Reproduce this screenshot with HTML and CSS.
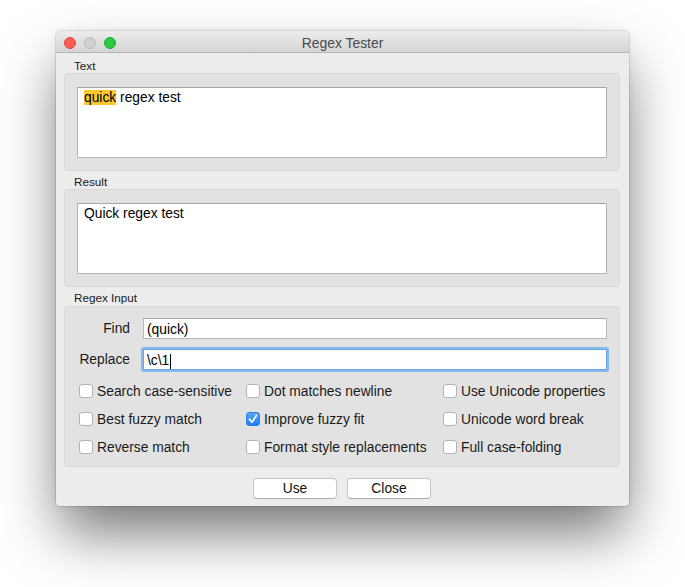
FILE: index.html
```html
<!DOCTYPE html>
<html>
<head>
<meta charset="utf-8">
<title>Regex Tester</title>
<link rel="stylesheet" href="styles.css">
</head>
<body>
<div class="window">
  <div class="titlebar">
    <div class="lights">
      <span class="light red"></span>
      <span class="light gray"></span>
      <span class="light green"></span>
    </div>
    <div class="title">Regex Tester</div>
  </div>
  <div class="content">
    <div class="glabel first">Text</div>
    <div class="group">
      <div class="textarea"><span class="hl">quick</span> regex test</div>
    </div>
    <div class="glabel">Result</div>
    <div class="group">
      <div class="textarea">Quick regex test</div>
    </div>
    <div class="glabel third">Regex Input</div>
    <div class="group regex">
      <div class="fields">
        <div class="flabel">Find</div>
        <div class="field">(quick)</div>
        <div class="flabel">Replace</div>
        <div class="field focus">\c\1<span class="caret"></span></div>
      </div>
      <div class="checks">
        <div class="check"><span class="box"></span>Search case-sensitive</div>
        <div class="check"><span class="box"></span>Dot matches newline</div>
        <div class="check"><span class="box"></span>Use Unicode properties</div>
        <div class="check"><span class="box"></span>Best fuzzy match</div>
        <div class="check"><span class="box on"><svg viewBox="0 0 14 14" width="14" height="14"><path d="M3.6 7.4 L6 10.2 L10.4 3.4" fill="none" stroke="#fff" stroke-width="1.7" stroke-linecap="round" stroke-linejoin="round"/></svg></span>Improve fuzzy fit</div>
        <div class="check"><span class="box"></span>Unicode word break</div>
        <div class="check"><span class="box"></span>Reverse match</div>
        <div class="check"><span class="box"></span>Format style replacements</div>
        <div class="check"><span class="box"></span>Full case-folding</div>
      </div>
    </div>
    <div class="buttons">
      <div class="btn">Use</div>
      <div class="btn">Close</div>
    </div>
  </div>
</div>
</body>
</html>
```
FILE: styles.css
```css
html, body {
  margin: 0;
  padding: 0;
  background: #ffffff;
}
body {
  min-height: 587px;
  box-sizing: border-box;
  padding: 31px 0 0 56px;
  font-family: "Liberation Sans", Arial, sans-serif;
  font-size: 13.8px;
  color: #000;
}
.window {
  width: 573px;
  height: 475px;
  box-sizing: border-box;
  background: #ececec;
  border-radius: 5px 5px 4px 4px;
  box-shadow: 0 0 0 1px rgba(0,0,0,0.09), 0 0 6px rgba(0,0,0,0.08), 0 30px 58px -4px rgba(0,0,0,0.55);
  display: flex;
  flex-direction: column;
  overflow: hidden;
}
.titlebar {
  height: 21px;
  border-bottom: 1px solid #b4b4b4;
  background: linear-gradient(#ececec, #d5d5d5);
  display: flex;
  align-items: center;
  position: relative;
}
.lights {
  display: flex;
  gap: 8px;
  padding-left: 8px;
  padding-top: 2px;
}
.light {
  width: 12px;
  height: 12px;
  border-radius: 50%;
  box-sizing: border-box;
}
.red { background: #fc5f57; border: 1px solid #e1443f; }
.gray { background: #d0d0d0; border: 1px solid #bdbdbd; }
.green { background: #2bc840; border: 1px solid #1faa31; }
.title {
  position: absolute;
  left: 0;
  right: 0;
  top: 4px;
  text-align: center;
  color: #4b4b4b;
  font-size: 13.9px;
  line-height: 16px;
}
.content {
  padding: 0 9px 0 8px;
  display: flex;
  flex-direction: column;
}
.glabel {
  height: 18px;
  box-sizing: border-box;
  padding: 4px 0 0 10px;
  font-size: 11.7px;
  line-height: 13px;
  color: #1a1a1a;
}
.glabel.first {
  height: 20px;
  padding-top: 6px;
}
.glabel.third {
  height: 19px;
}
.group {
  background: #e2e2e2;
  border: 1px solid #d8d8d8;
  border-radius: 4px;
  padding: 13px 12px 12px 12px;
}
.textarea {
  height: 71px;
  box-sizing: border-box;
  background: #fff;
  border: 1px solid #b4b4b4;
  border-top-color: #a6a6a6;
  padding: 2px 6px;
  line-height: 16px;
}
.hl {
  background: #fcc72f;
}
.group.regex {
  padding: 11px 12px 5px 14px;
}
.fields {
  display: grid;
  grid-template-columns: 51px 1fr;
  column-gap: 13px;
  row-gap: 10px;
  align-items: center;
}
.flabel {
  text-align: right;
  color: #1a1a1a;
}
.field {
  height: 21px;
  box-sizing: border-box;
  background: #fff;
  border: 1px solid #b8b8b8;
  border-top-color: #a9a9a9;
  padding: 3px 3px 0;
  line-height: 16px;
  display: flex;
  align-items: center;
}
.field.focus {
  border-color: #6aa2db;
  box-shadow: 0 0 0 2px #85bbef;
  border-radius: 1px;
}
.caret {
  display: inline-block;
  width: 1px;
  height: 15px;
  background: #000;
  margin-left: 1px;
}
.checks {
  margin-top: 7px;
  display: grid;
  grid-template-columns: 167px 197px 1fr;
  grid-auto-rows: 28px;
}
.check {
  display: flex;
  align-items: center;
  color: #1a1a1a;
  white-space: nowrap;
}
.box {
  width: 14px;
  height: 14px;
  box-sizing: border-box;
  background: #fff;
  border: 1px solid #b3b3b3;
  border-radius: 3px;
  margin-right: 4px;
  display: inline-flex;
}
.box.on {
  background: linear-gradient(#5aa6fb, #1f7df2);
  border-color: #2b7fe0;
}
.box.on svg {
  margin: -1px;
}
.buttons {
  margin-top: 11px;
  display: flex;
  justify-content: center;
  gap: 10px;
}
.btn {
  width: 84px;
  height: 21px;
  box-sizing: border-box;
  background: #fff;
  border: 1px solid #c6c6c6;
  border-bottom-color: #acacac;
  border-radius: 4px;
  text-align: center;
  line-height: 19px;
  color: #111;
}
```
